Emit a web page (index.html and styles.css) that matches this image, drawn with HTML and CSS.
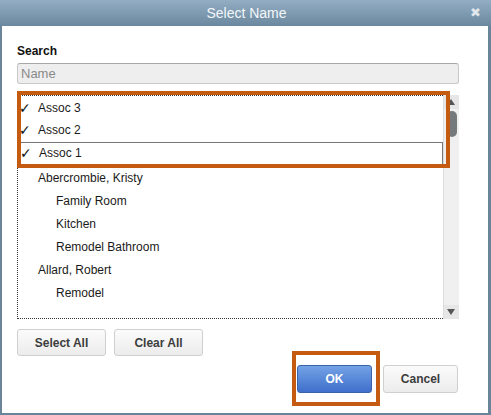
FILE: index.html
```html
<!DOCTYPE html>
<html>
<head>
  <title>Select Name</title>
  <link rel="stylesheet" href="styles.css">
</head>
<body>
  <div class="window">
    <div class="titlebar">
      <span class="title">Select Name</span>
      <span class="close">&#10006;</span>
    </div>
    <div class="content">
      <div class="search-label">Search</div>
      <div class="search-box">Name</div>

      <div class="list-wrap">
        <div class="list">
          <div class="row checked first"><span class="check">&#10003;</span>Assoc 3</div>
          <div class="row checked"><span class="check">&#10003;</span>Assoc 2</div>
          <div class="row checked current"><span class="check">&#10003;</span>Assoc 1</div>
          <div class="row">Abercrombie, Kristy</div>
          <div class="row sub">Family Room</div>
          <div class="row sub">Kitchen</div>
          <div class="row sub">Remodel Bathroom</div>
          <div class="row">Allard, Robert</div>
          <div class="row sub">Remodel</div>
        </div>
        <div class="scrollbar">
          <div class="arrow up"></div>
          <div class="thumb"></div>
          <div class="track"></div>
          <div class="arrow down"></div>
        </div>
        <div class="callout list-callout"></div>
      </div>

      <div class="buttons">
        <button class="btn">Select All</button>
        <button class="btn">Clear All</button>
      </div>

      <div class="footer">
        <div class="ok-wrap">
          <button class="btn primary">OK</button>
          <div class="callout ok-callout"></div>
        </div>
        <button class="btn">Cancel</button>
      </div>
    </div>
  </div>
</body>
</html>
```

FILE: styles.css
```css
body {
  margin: 0;
  font-family: "Liberation Sans", Arial, sans-serif;
  font-size: 12px;
  color: #222;
}

.window {
  width: 491px;
  height: 415px;
  box-sizing: border-box;
  border-left: 2px solid #6a8499;
  border-right: 3px solid #6a8499;
  border-bottom: 2px solid #6a8499;
  background: #fff;
  display: flex;
  flex-direction: column;
}

.titlebar {
  position: relative;
  height: 26px;
  margin: 0 -3px 0 -2px;
  background: linear-gradient(#93adc3, #6a889f);
  display: flex;
  align-items: center;
  justify-content: center;
}

.title {
  color: #f4f7fa;
  font-size: 14px;
  padding-left: 2px;
}

.close {
  position: absolute;
  right: 10px;
  top: 5px;
  color: #dfe6ec;
  font-family: "DejaVu Sans", sans-serif;
  font-size: 13px;
  font-weight: bold;
}

.content {
  padding: 18px 29px 0 15px;
  flex: 1;
}

.search-label {
  font-weight: bold;
  line-height: 14px;
  color: #111;
}

.search-box {
  margin-top: 5px;
  height: 19px;
  line-height: 19px;
  background: #eeeeee;
  border: 1px solid #c8c8c8;
  border-top-color: #a8a8a8;
  border-radius: 3px;
  padding-left: 3px;
  color: #8a8a8a;
  font-size: 13px;
}

.list-wrap {
  position: relative;
  margin-top: 11px;
  display: flex;
  height: 224px;
}

.list {
  flex: 1;
  border: 1px dotted #333;
  border-right: none;
  padding-top: 1px;
}

.row {
  position: relative;
  height: 23px;
  line-height: 23px;
  padding-left: 20px;
  color: #1a1a1a;
}

.row.first {
  height: 22px;
  line-height: 22px;
}

.row.sub {
  padding-left: 38px;
}

.row.current {
  border: 1px solid #777;
  height: 21px;
  line-height: 21px;
  margin-left: 1px;
  margin-bottom: 2px;
  padding-left: 19px;
}

.check {
  position: absolute;
  left: 1px;
  top: 0;
  font-family: "DejaVu Sans", sans-serif;
  font-size: 14px;
  color: #111;
}

.row.current .check {
  left: 0;
}

.scrollbar {
  width: 15px;
  background: #f0f0f0;
  display: flex;
  flex-direction: column;
  border-left: 1px solid #ddd;
}

.arrow {
  height: 14px;
  background: #e6e6e6;
  position: relative;
}

.arrow.up::after,
.arrow.down::after {
  content: "";
  position: absolute;
  left: 3px;
  border-left: 4px solid transparent;
  border-right: 4px solid transparent;
}

.arrow.up::after {
  top: 4px;
  border-bottom: 6px solid #555;
}

.arrow.down::after {
  top: 4px;
  border-top: 6px solid #555;
}

.thumb {
  margin: 2px 2px 0 3px;
  height: 26px;
  border-radius: 5px;
  background: #757b7c;
}

.track {
  flex: 1;
}

.callout {
  position: absolute;
  border: 4px solid #c55a11;
  box-sizing: border-box;
  pointer-events: none;
}

.list-callout {
  left: 0;
  top: -4px;
  width: 433px;
  height: 77px;
}

.buttons {
  display: flex;
  gap: 8px;
  margin-top: 10px;
}

.btn {
  font-family: "Liberation Sans", Arial, sans-serif;
  font-size: 12px;
  font-weight: bold;
  color: #3d3d3d;
  height: 27px;
  width: 89px;
  border: 1px solid #cfcfcf;
  border-radius: 3px;
  background: linear-gradient(#fbfbfb, #ececec);
  padding: 0;
}

.footer {
  display: flex;
  justify-content: flex-end;
  align-items: center;
  gap: 11px;
  margin-top: 9px;
  margin-right: 1px;
}

.footer .btn {
  width: 75px;
  height: 28px;
}

.ok-wrap {
  position: relative;
}

.btn.primary {
  display: block;
  color: #fff;
  border-color: #3c62a8;
  background: linear-gradient(#73a2e6, #3f6fcb);
}

.ok-callout {
  left: -5px;
  top: -14px;
  width: 88px;
  height: 55px;
}
```
